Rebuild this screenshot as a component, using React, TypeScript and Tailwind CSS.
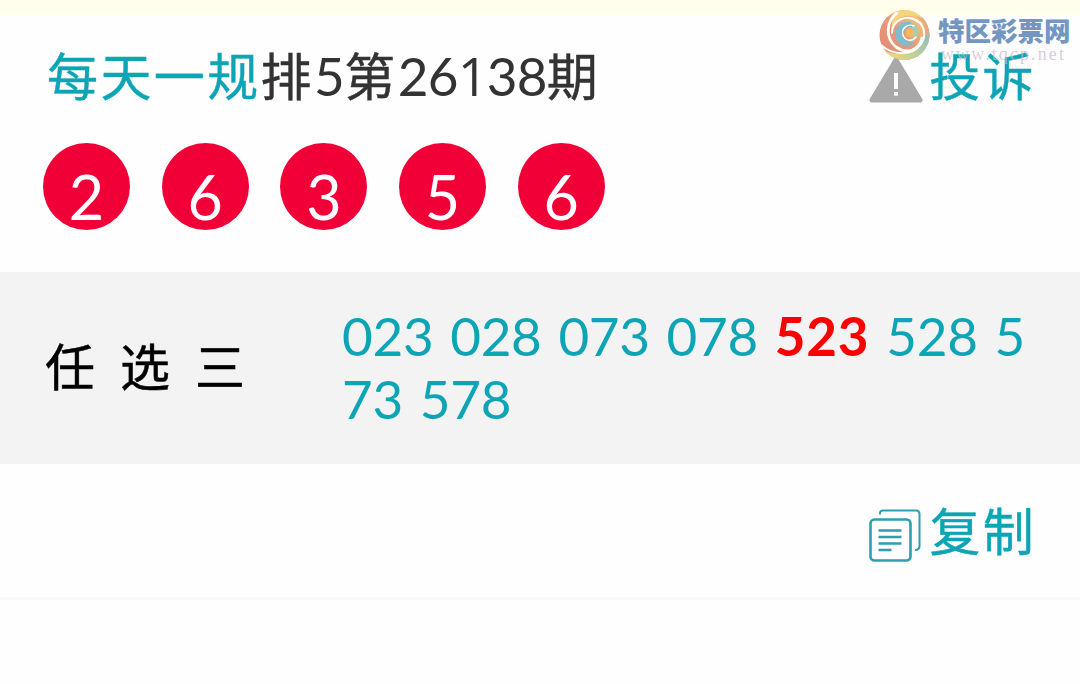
const balls = ["2", "6", "3", "5", "6"];

function WarningIcon() {
  return (
    <svg width="54" height="46" viewBox="0 0 54 46" className="block">
      <path d="M27 3 L51 43 H3 Z" fill="#a9a9a9" stroke="#a9a9a9" strokeWidth="5" strokeLinejoin="round" />
      <rect x="25" y="16" width="4" height="16" fill="#fff" />
      <rect x="25" y="35" width="4" height="3.6" fill="#fff" />
    </svg>
  );
}

function CopyIcon() {
  return (
    <svg width="52" height="54" viewBox="0 0 52 54" fill="none" stroke="#2b9fae" className="block">
      <path d="M11 6.5 V5 Q11 2.5 14 2.5 H47 Q50.5 2.5 50.5 6 V38 Q50.5 42 46 42" strokeWidth="2" />
      <rect x="1.5" y="11.5" width="40" height="41" rx="4" strokeWidth="2.6" />
      <path d="M9.5 22.5 H32.5 M9.5 29 H32.5 M9.5 35.5 H32.5 M9.5 42 H22.5" strokeWidth="2.6" />
    </svg>
  );
}

function SwirlLogo() {
  return (
    <svg width="52" height="52" viewBox="0 0 52 52" className="block">
      <defs>
        <clipPath id="disc">
          <circle cx="26.5" cy="26" r="25" />
        </clipPath>
        <linearGradient id="warm" x1="0" y1="1" x2="1" y2="0">
          <stop offset="0" stopColor="#df8577" />
          <stop offset="0.5" stopColor="#e89a78" />
          <stop offset="1" stopColor="#f5dd85" />
        </linearGradient>
        <linearGradient id="foot" x1="0" y1="0.5" x2="1" y2="0">
          <stop offset="0" stopColor="#eed87c" />
          <stop offset="0.5" stopColor="#b5cf9c" />
          <stop offset="1" stopColor="#84bdcb" />
        </linearGradient>
      </defs>
      <g clipPath="url(#disc)">
        <rect width="52" height="52" fill="url(#warm)" />
        <path d="M13 22 C15 9 29 3 40 9 L51 18 L53 0 L16 0 Z" fill="#f3d47f" />
        <path d="M35 6 C48 11 51 26 43 38 L53 34 L53 12 Z" fill="#e8a883" />
        <path d="M5 41 C20 49 38 44 45 31 L53 22 L50 53 L4 53 Z" fill="url(#foot)" />
        <path d="M33 13 C23 11 15 19 18 29 C20 37 30 40 37 35 C30 34 26 30 26 25 C26 20 30 17 35 19 Z" fill="#80bccb" />
        <path d="M34 14 C41 16 42 25 38 30 C35 34 31 33 29 31 C35 31 37 26 34 22 Z" fill="#a9cdb0" />
        <circle cx="32" cy="24" r="4.2" fill="#f5b85d" />
        <g fill="none" stroke="#fffdf5" strokeLinecap="round">
          <path d="M19 4 C8 12 7 29 18 38 C29 46 41 41 44 29" strokeWidth="2.8" />
          <path d="M40 13 C29 4 14 11 14 24" strokeWidth="2" />
          <path d="M3 36 C15 47 35 47 43 35 C49 26 46 15 38 11" strokeWidth="2" />
          <path d="M36 17 C29 14 23 20 25 26 C27 32 34 33 38 28" strokeWidth="1.4" />
        </g>
      </g>
    </svg>
  );
}

function Watermark() {
  return (
    <div className="pointer-events-none absolute top-[9px] left-[878px] flex">
      <SwirlLogo />
      <div className="ml-[8px] pt-[6px] whitespace-nowrap">
        <div className="text-[26.5px] leading-[32px] font-black text-[#7496c3]">特区彩票网</div>
        <div className="ml-[3px] font-['Liberation_Serif',serif] text-[18px] leading-[15px] tracking-[2.1px] text-[#cdb5c4]/70">
          www.tqcp.net
        </div>
      </div>
    </div>
  );
}

export default function App() {
  return (
    <div className="relative h-[684px] w-[1080px] overflow-hidden bg-[#fefefe] font-['Lato','Noto_Sans_CJK_SC',sans-serif] text-[#333]">
      <div className="h-[15px] bg-[#fffdec]" />

      <header className="flex h-[128px] items-start justify-between pt-[30px] pr-[44px] pl-[47px] text-[51px] leading-[64px] tracking-[2.4px]">
        <h1 className="whitespace-nowrap">
          <span className="text-[#0da5b5] [-webkit-text-stroke:0.4px]">每天一规</span>
          <span className="[-webkit-text-stroke:0.4px]">排</span>
          <span className="text-[53px] leading-none tracking-[-0.5px]">5</span>
          <span className="[-webkit-text-stroke:0.4px]">第</span>
          <span className="text-[53px] leading-none tracking-[-0.7px]">
            26<span className="inline-block w-[29px] text-center font-['Open_Sans',sans-serif] leading-none">1</span>38
          </span>
          <span className="[-webkit-text-stroke:0.4px]">期</span>
        </h1>
        <div className="flex text-[#0da5b5] [-webkit-text-stroke:0.4px]">
          <div className="mt-[12px] mr-[6px]">
            <WarningIcon />
          </div>
          投诉
        </div>
      </header>

      <div className="flex h-[129px] gap-[31.7px] pl-[43px]">
        {balls.map((n, i) => (
          <div key={i} className="size-[87px] shrink-0 rounded-full bg-[#f10037] pt-[10px] text-center text-[61px] leading-[87px] text-white">
            {n}
          </div>
        ))}
      </div>

      <section className="flex h-[192px] items-center bg-[#f3f3f3]">
        <div className="-mt-[2px] w-[342px] shrink-0 pl-[45px] text-[50px] tracking-[25px] text-black [-webkit-text-stroke:0.5px]">任选三</div>
        <div className="-mt-[2px] w-[700px] text-[53px] leading-[63px] tracking-[-0.3px] [word-spacing:3.6px] break-all text-[#0da5b5]">
          023 028 073 078 <b className="font-bold tracking-[0.8px] text-[#fa0000]">523</b> 528 573 578
        </div>
      </section>

      <div className="flex h-[136px] justify-end border-b-[3px] border-[#f8f8f8] pt-[36px] pr-[44px] text-[51px] leading-[64px] tracking-[2.3px] text-[#0da5b5] [-webkit-text-stroke:0.4px]">
        <div className="mt-[8px] mr-[8px]">
          <CopyIcon />
        </div>
        复制
      </div>

      <Watermark />
    </div>
  );
}
